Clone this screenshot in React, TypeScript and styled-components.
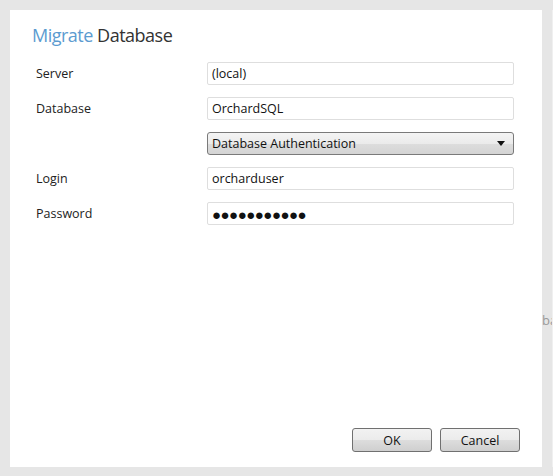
import styled, { createGlobalStyle } from "styled-components";

const GlobalStyle = createGlobalStyle`
  html, body {
    margin: 0;
    padding: 0;
    background: #e6e6e6;
    font-family: "Open Sans", "Noto Sans", sans-serif;
  }
`;

const Screen = styled.div`
  width: 553px;
  height: 476px;
  display: flex;
  box-sizing: border-box;
  padding: 10px 0 9px 10px;
  overflow: hidden;
`;

const Dialog = styled.div`
  width: 532px;
  background: #ffffff;
  display: flex;
  flex-direction: column;
  padding: 13px 0 15px 22px;
  box-sizing: border-box;
`;

const SideStrip = styled.div`
  flex: 1;
  overflow: hidden;
  padding-top: 301px;
  border-right: 1px solid #f0f0f0;
  color: #9a9a9a;
  font-size: 13px;
  white-space: nowrap;
`;

const Title = styled.h1`
  margin: 0 0 15px 0;
  font-size: 18px;
  font-weight: 400;
  color: #333333;
  line-height: 24px;
  letter-spacing: -0.5px;
`;

const Accent = styled.span`
  color: #5b9bd0;
`;

const Form = styled.div`
  display: grid;
  grid-template-columns: 171px 307px;
  row-gap: 12px;
  padding-left: 4px;
  align-items: center;
`;

const Label = styled.label`
  font-size: 12.5px;
  color: #222222;
`;

const Field = styled.div<{ $secret?: boolean }>`
  height: 23px;
  box-sizing: border-box;
  border: 1px solid #dedede;
  border-radius: 2px;
  padding: 0 4px;
  display: flex;
  align-items: center;
  font-size: ${(p) => (p.$secret ? "15px" : "12.5px")};
  letter-spacing: ${(p) => (p.$secret ? "-0.5px" : "0")};
  color: #111111;
`;

const Select = styled.div`
  height: 23px;
  box-sizing: border-box;
  border: 1px solid #7a7a7a;
  border-radius: 3px;
  padding: 0 8px 0 4px;
  display: flex;
  align-items: center;
  justify-content: space-between;
  background: linear-gradient(#f4f4f4 0%, #ebebeb 50%, #dddddd 51%, #d4d4d4 100%);
  font-size: 12.5px;
  color: #111111;
`;

const Spacer = styled.div``;

const Footer = styled.div`
  margin-top: auto;
  display: flex;
  justify-content: flex-end;
  gap: 8px;
  padding-right: 22px;
`;

const Button = styled.button`
  width: 80px;
  height: 24px;
  box-sizing: border-box;
  border: 1px solid #707070;
  border-radius: 3px;
  background: linear-gradient(#f2f2f2 0%, #ebebeb 50%, #dddddd 51%, #cfcfcf 100%);
  font-family: "Open Sans", "Noto Sans", sans-serif;
  font-size: 12.5px;
  color: #111111;
  padding: 0;
`;

export default function App() {
  return (
    <>
      <GlobalStyle />
      <Screen>
        <Dialog>
          <Title>
            <Accent>Migrate</Accent> Database
          </Title>
          <Form>
            <Label>Server</Label>
            <Field>(local)</Field>
            <Label>Database</Label>
            <Field>OrchardSQL</Field>
            <Spacer />
            <Select>
              <span>Database Authentication</span>
              <svg width="8" height="5" viewBox="0 0 8 5">
                <path d="M0 0h8L4 5z" fill="#111" />
              </svg>
            </Select>
            <Label>Login</Label>
            <Field>orcharduser</Field>
            <Label>Password</Label>
            <Field $secret>●●●●●●●●●●●</Field>
          </Form>
          <Footer>
            <Button>OK</Button>
            <Button>Cancel</Button>
          </Footer>
        </Dialog>
        <SideStrip>ba</SideStrip>
      </Screen>
    </>
  );
}
